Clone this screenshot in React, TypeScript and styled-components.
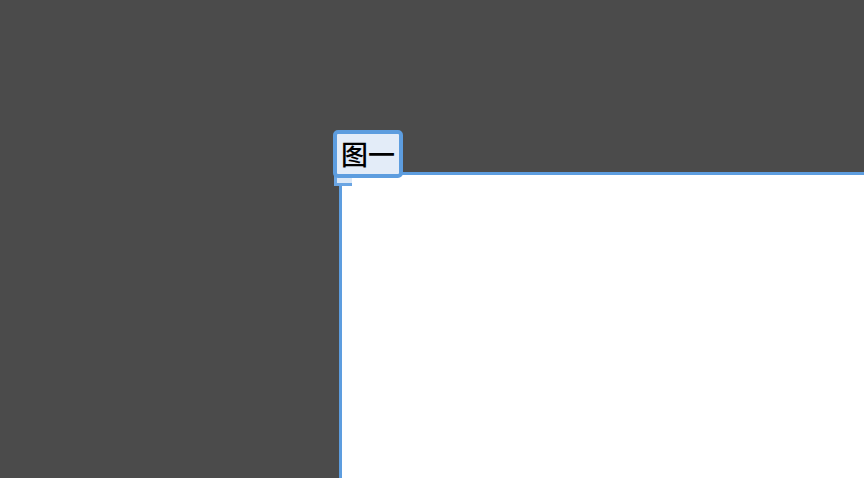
import styled, { createGlobalStyle } from 'styled-components';

const GlobalStyle = createGlobalStyle`
    html, body {
        margin: 0;
        padding: 0;
        background: #4b4b4b;
        overflow: hidden;
    }
`;

const Workspace = styled.div`
    width: 864px;
    height: 478px;
    background: #4b4b4b;
    padding: 172px 0 0 339px;
    box-sizing: border-box;
    display: flex;
    align-items: stretch;
`;

const Frame = styled.div`
    position: relative;
    flex: 1;
    background: #ffffff;
    border-top: 3px solid #5d9ddf;
    border-left: 3px solid #5d9ddf;
    box-sizing: border-box;
`;

const FrameTag = styled.div`
    position: absolute;
    left: -9px;
    top: -45px;
    width: 70px;
    height: 48px;
    box-sizing: border-box;
    border: 4px solid #5d9ddf;
    border-radius: 5px;
    background: #e3ecf8;
    display: flex;
    align-items: center;
    justify-content: center;
    font-family: 'Noto Sans CJK SC', sans-serif;
    font-size: 27px;
    font-weight: 500;
    line-height: 1;
    color: #000;
    padding-bottom: 2px;
`;

const Handle = styled.div`
    position: absolute;
    left: -8px;
    top: -7px;
    width: 18px;
    height: 18px;
    box-sizing: border-box;
    border: 3px solid #6aa5e3;
    border-right: none;
    background: #dbe8f7;
`;

export default function App() {
    return (
        <>
            <GlobalStyle />
            <Workspace>
                <Frame>
                    <Handle />
                    <FrameTag>图一</FrameTag>
                </Frame>
            </Workspace>
        </>
    );
}
